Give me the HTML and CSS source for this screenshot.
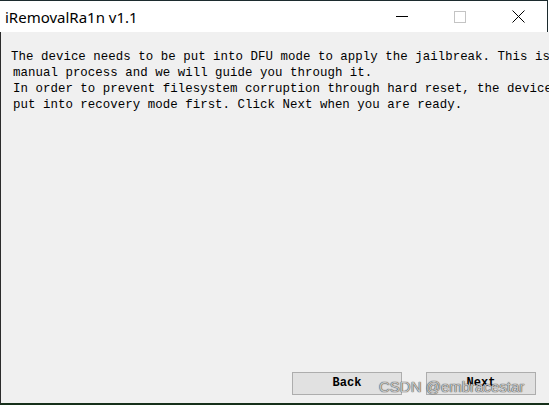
FILE: index.html
```html
<!DOCTYPE html>
<html>
	<head>
		<title>iRemovalRa1n v1.1</title><meta charset="utf-8">
		<link rel="stylesheet" href="styles.css">
	</head>
	<body>
		<div class="ventana">
			<div class="barraTitulo">
				<span class="titulo">iRemovalRa1n v1.1</span>
				<div class="botonesVentana">
					<div class="botonVentana">
						<svg width="12" height="12" viewBox="0 0 12 12"><path d="M0 5.5H12" stroke="#000" stroke-width="1"/></svg>
					</div>
					<div class="botonVentana">
						<svg width="12" height="12" viewBox="0 0 12 12"><rect x="0.5" y="0.5" width="11" height="11" fill="none" stroke="#c4c4c4" stroke-width="1"/></svg>
					</div>
					<div class="botonVentana">
						<svg width="13" height="13" viewBox="0 0 13 13"><path d="M0.5 0.5L12.5 12.5M12.5 0.5L0.5 12.5" stroke="#000" stroke-width="1"/></svg>
					</div>
				</div>
			</div>
			<div class="contenido">
				<div class="texto">The device needs to be put into DFU mode to apply the jailbreak. This is a
<span class="sangria">manual process and we will guide you through it.</span>
<span class="sangria">In order to prevent filesystem corruption through hard reset, the device must be</span>
<span class="sangria">put into recovery mode first. Click Next when you are ready.</span></div>
				<div class="botonesForm">
					<div class="botonForm">Back</div>
					<div class="botonForm">Next</div>
				</div>
				<div class="marca">CSDN @embracestar</div>
			</div>
		</div>
	</body>
</html>
```

FILE: styles.css
```css
body {margin: 0; background-color: #ffffff;}
.ventana {width: 549px; height: 405px; display: flex; flex-direction: column; overflow: hidden;}
.barraTitulo {height: 32px; display: flex; align-items: center; background-color: #ffffff; border-top: 1px solid #1c2b2e; border-right: 1px solid #1c2b2e; margin-right: 1px; box-sizing: border-box;}
.titulo {font-family: "Noto Sans", sans-serif; font-size: 15px; color: #000000; padding-left: 5px; flex: 1; white-space: nowrap;}
.botonesVentana {display: flex; height: 100%;}
.botonVentana {width: 58px; display: flex; align-items: center; justify-content: center;}
.contenido {flex: 1; position: relative; display: flex; flex-direction: column; background-color: #f0f0f0; border-left: 1px solid #2b2b2b; border-bottom: 2px solid #16301a;}
.texto {font-family: "Liberation Mono", monospace; font-size: 12.4px; line-height: 16px; color: #000000; white-space: pre; overflow: hidden; padding: 17px 0 0 10px; letter-spacing: 0.05px;}
.sangria {padding-left: 2px;}
.botonesForm {margin-top: auto; display: flex; justify-content: flex-end; gap: 24px; padding: 0 13px 8px 0;}
.botonForm {width: 108px; height: 21px; border: 1px solid #adadad; background-color: #e1e1e1; font-family: "Liberation Mono", monospace; font-weight: bold; font-size: 12px; line-height: 21px; text-align: center; color: #000000;}
.marca {position: absolute; left: 378px; top: 346px; font-family: "Liberation Sans", Arial, sans-serif; font-size: 15px; color: rgba(215, 215, 215, 0.9); text-shadow: 0 0 1px #404040, 0 0 1px #404040;}
```
